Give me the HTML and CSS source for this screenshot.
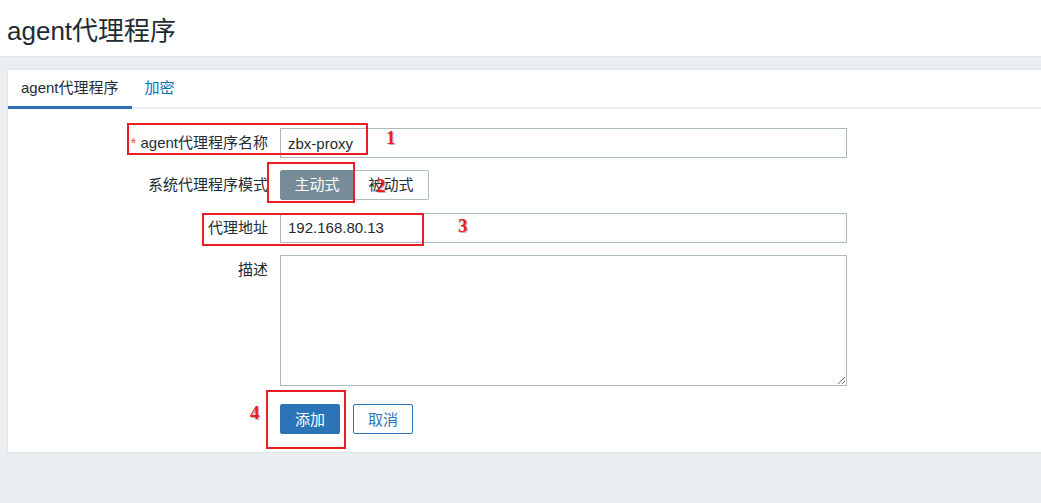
FILE: index.html
```html
<!DOCTYPE html>
<html lang="zh-CN">
<head>
	<meta charset="UTF-8">
	<title>agent代理程序</title>
	<link rel="stylesheet" href="styles.css">
</head>
<body>
	<header class="header">
		<h1 class="title">agent代理程序</h1>
	</header>
	<main class="main">
		<section class="panel">
			<nav class="tabs">
				<a class="tab tab-active" href="#">agent代理程序</a>
				<a class="tab" href="#">加密</a>
			</nav>
			<form class="form">
				<div class="row">
					<label class="label"><span class="req">*</span> agent代理程序名称</label>
					<div class="field"><input class="input" type="text" value="zbx-proxy"></div>
				</div>
				<div class="row">
					<label class="label">系统代理程序模式</label>
					<div class="field">
						<div class="seg">
							<span class="seg-btn seg-on">主动式</span>
							<span class="seg-btn">被动式</span>
						</div>
					</div>
				</div>
				<div class="row">
					<label class="label">代理地址</label>
					<div class="field"><input class="input" type="text" value="192.168.80.13"></div>
				</div>
				<div class="row">
					<label class="label">描述</label>
					<div class="field"><textarea class="textarea"></textarea></div>
				</div>
				<div class="row row-btns">
					<span class="label"></span>
					<div class="field btns">
						<button type="button" class="btn btn-primary">添加</button>
						<button type="button" class="btn btn-alt">取消</button>
					</div>
				</div>
			</form>
		</section>
	</main>

	<!-- annotations drawn over the screenshot -->
	<div class="mark mark-1"></div>
	<div class="mark mark-2"></div>
	<div class="mark mark-3"></div>
	<div class="mark mark-4"></div>
	<span class="num num-1">1</span>
	<span class="num num-2">2</span>
	<span class="num num-3">3</span>
	<span class="num num-4">4</span>
</body>
</html>
```

FILE: styles.css
```css
html{
	box-sizing: border-box;
	font-family: "Liberation Sans", "Noto Sans CJK SC", sans-serif;
	font-size: 15px;
	color: #1f2c33;
}
*,
*:before,
*:after{
	box-sizing: inherit;
}

body{
	margin: 0;
	min-height: 100vh;
	background-color: #ebeef0;
	position: relative;
	overflow: hidden;
}

.header{
	height: 57px;
	padding: 0 7px;
	background-color: #fff;
	border-bottom: 1px solid #dfe4e7;
	display: flex;
	align-items: center;
}
.title{
	margin: 0;
	font-size: 26px;
	font-weight: normal;
	color: #1f2c33;
}

.main{
	padding: 12px 0 0 7px;
}
.panel{
	background-color: #fff;
	border: 1px solid #dfe4e7;
	border-right: 0;
	margin-right: -2px;
}

.tabs{
	display: flex;
	height: 39px;
	border-bottom: 2px solid #ebeef0;
}
.tab{
	padding: 0 13px;
	line-height: 36px;
	text-decoration: none;
	color: #0275b8;
	border-bottom: 3px solid transparent;
	margin-bottom: -2px;
}
.tab-active{
	color: #1f2c33;
	border-bottom-color: #2b72b4;
}

.form{
	padding: 19px 0 18px;
}
.row{
	display: grid;
	grid-template-columns: 260px 567px;
	column-gap: 12px;
	margin-bottom: 12.3px;
}
.row-btns{
	margin-top: 18px;
	margin-bottom: 0;
}
.label{
	text-align: right;
	line-height: 30px;
}
.req{
	color: #e45959;
}

.input{
	width: 100%;
	height: 30px;
	border: 1px solid #acbbc2;
	padding: 0 7px;
	font: inherit;
	color: #1f2c33;
	outline: none;
	display: block;
}
.textarea{
	width: 100%;
	height: 131px;
	border: 1px solid #acbbc2;
	font: inherit;
	display: block;
	resize: both;
	outline: none;
}

.seg{
	display: flex;
}
.seg-btn{
	height: 30px;
	line-height: 28px;
	width: 75px;
	text-align: center;
	white-space: nowrap;
	border: 1px solid #acbbc2;
	background-color: #fff;
}
.seg-btn:first-child{
	border-radius: 2px 0 0 2px;
}
.seg-btn:last-child{
	border-left: 0;
	border-radius: 0 2px 2px 0;
}
.seg-on{
	width: 74px;
	background-color: #768d99;
	border-color: #768d99;
	color: #fff;
}

.btns{
	display: flex;
	gap: 13px;
}
.btn{
	width: 60px;
	height: 30px;
	border-radius: 2px;
	font: inherit;
	padding: 0;
	cursor: pointer;
}
.btn-primary{
	background-color: #2b74b8;
	border: 1px solid #2b74b8;
	color: #fff;
}
.btn-alt{
	background-color: #fff;
	border: 1px solid #2b74b8;
	color: #2b74b8;
}

/* red annotation boxes and numbers */
.mark{
	position: absolute;
	border: 2px solid #ea1c24;
}
.mark-1{ left: 127px; top: 123px; width: 241px; height: 32px; }
.mark-2{ left: 267px; top: 162px; width: 88px; height: 41px; }
.mark-3{ left: 202px; top: 213px; width: 222px; height: 33px; }
.mark-4{ left: 266px; top: 390px; width: 80px; height: 59px; }

.num{
	position: absolute;
	font-family: "Liberation Serif", "DejaVu Serif", serif;
	font-weight: bold;
	font-size: 19px;
	line-height: 1;
	color: #ea1c24;
	text-shadow: 1px 1px 0 #bbb;
}
.num-1{ left: 386px; top: 128px; }
.num-2{ left: 376px; top: 176px; }
.num-3{ left: 458px; top: 216px; }
.num-4{ left: 250px; top: 403px; }
```
